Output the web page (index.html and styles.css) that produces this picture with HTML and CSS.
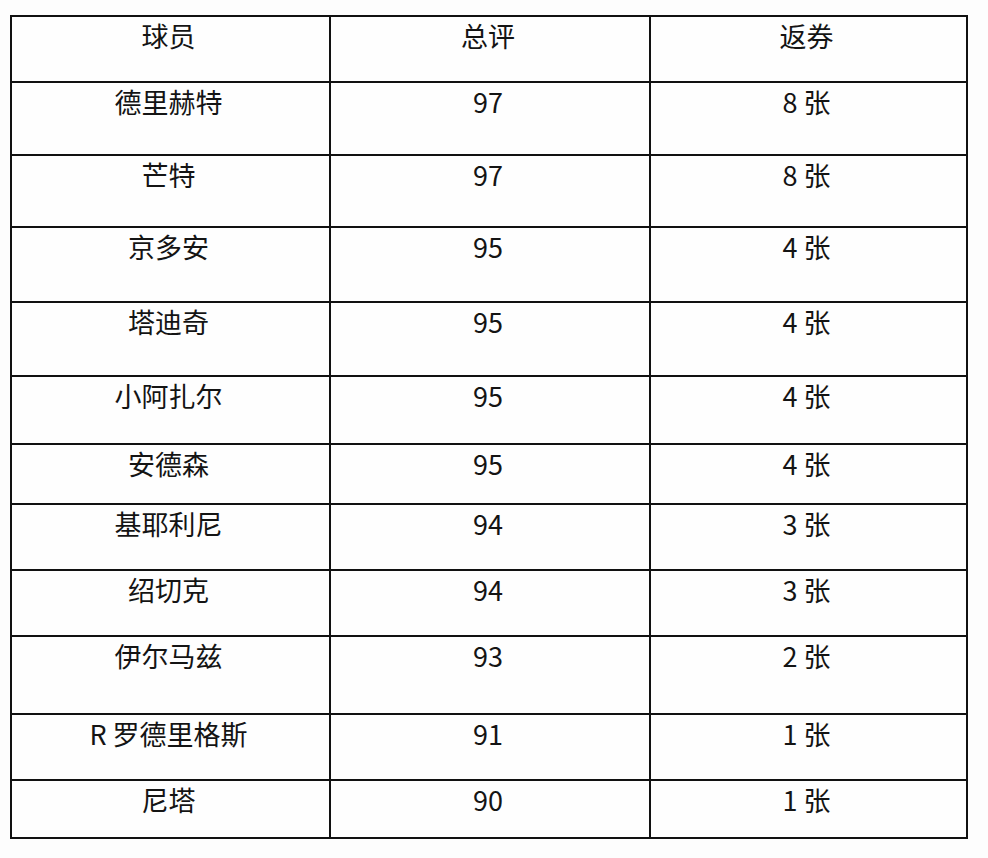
FILE: index.html
```html
<!DOCTYPE html>
<html lang="zh">
<head>
<meta charset="utf-8">
<link rel="stylesheet" href="styles.css">
<title>返券表</title>
</head>
<body>
<table class="grid">
  <colgroup><col class="c1"><col class="c2"><col class="c3"></colgroup>
  <tr class="r-h"><td>球员</td><td>总评</td><td>返券</td></tr>
  <tr class="r1"><td>德里赫特</td><td>97</td><td>8 张</td></tr>
  <tr class="r2"><td>芒特</td><td>97</td><td>8 张</td></tr>
  <tr class="r3"><td>京多安</td><td>95</td><td>4 张</td></tr>
  <tr class="r4"><td>塔迪奇</td><td>95</td><td>4 张</td></tr>
  <tr class="r5"><td>小阿扎尔</td><td>95</td><td>4 张</td></tr>
  <tr class="r6"><td>安德森</td><td>95</td><td>4 张</td></tr>
  <tr class="r7"><td>基耶利尼</td><td>94</td><td>3 张</td></tr>
  <tr class="r8"><td>绍切克</td><td>94</td><td>3 张</td></tr>
  <tr class="r9"><td>伊尔马兹</td><td>93</td><td>2 张</td></tr>
  <tr class="r10"><td>R 罗德里格斯</td><td>91</td><td>1 张</td></tr>
  <tr class="r11"><td>尼塔</td><td>90</td><td>1 张</td></tr>
</table>
</body>
</html>
```

FILE: styles.css
```css
html, body {
  margin: 0;
  padding: 0;
  background: #fdfdfd;
}

body {
  padding: 15px 0 0 10px;
  font-family: "Noto Sans CJK SC", "Noto Sans", sans-serif;
  color: #141414;
}

.grid {
  border-collapse: collapse;
  table-layout: fixed;
  width: 956px;
  background: #fefefe;
}

.c1 { width: 319px; }
.c2 { width: 320px; }
.c3 { width: 317px; }

.grid td {
  border: 2px solid #111;
  padding: 0 4px 0 0;
  vertical-align: top;
  text-align: center;
  font-size: 27px;
  line-height: 38px;
}

.r-h { height: 66px; }
.r1 { height: 73px; }
.r2 { height: 72px; }
.r3 { height: 75px; }
.r4 { height: 74px; }
.r5 { height: 68px; }
.r6 { height: 60px; }
.r7 { height: 66px; }
.r8 { height: 66px; }
.r9 { height: 78px; }
.r10 { height: 66px; }
.r11 { height: 58px; }
```
